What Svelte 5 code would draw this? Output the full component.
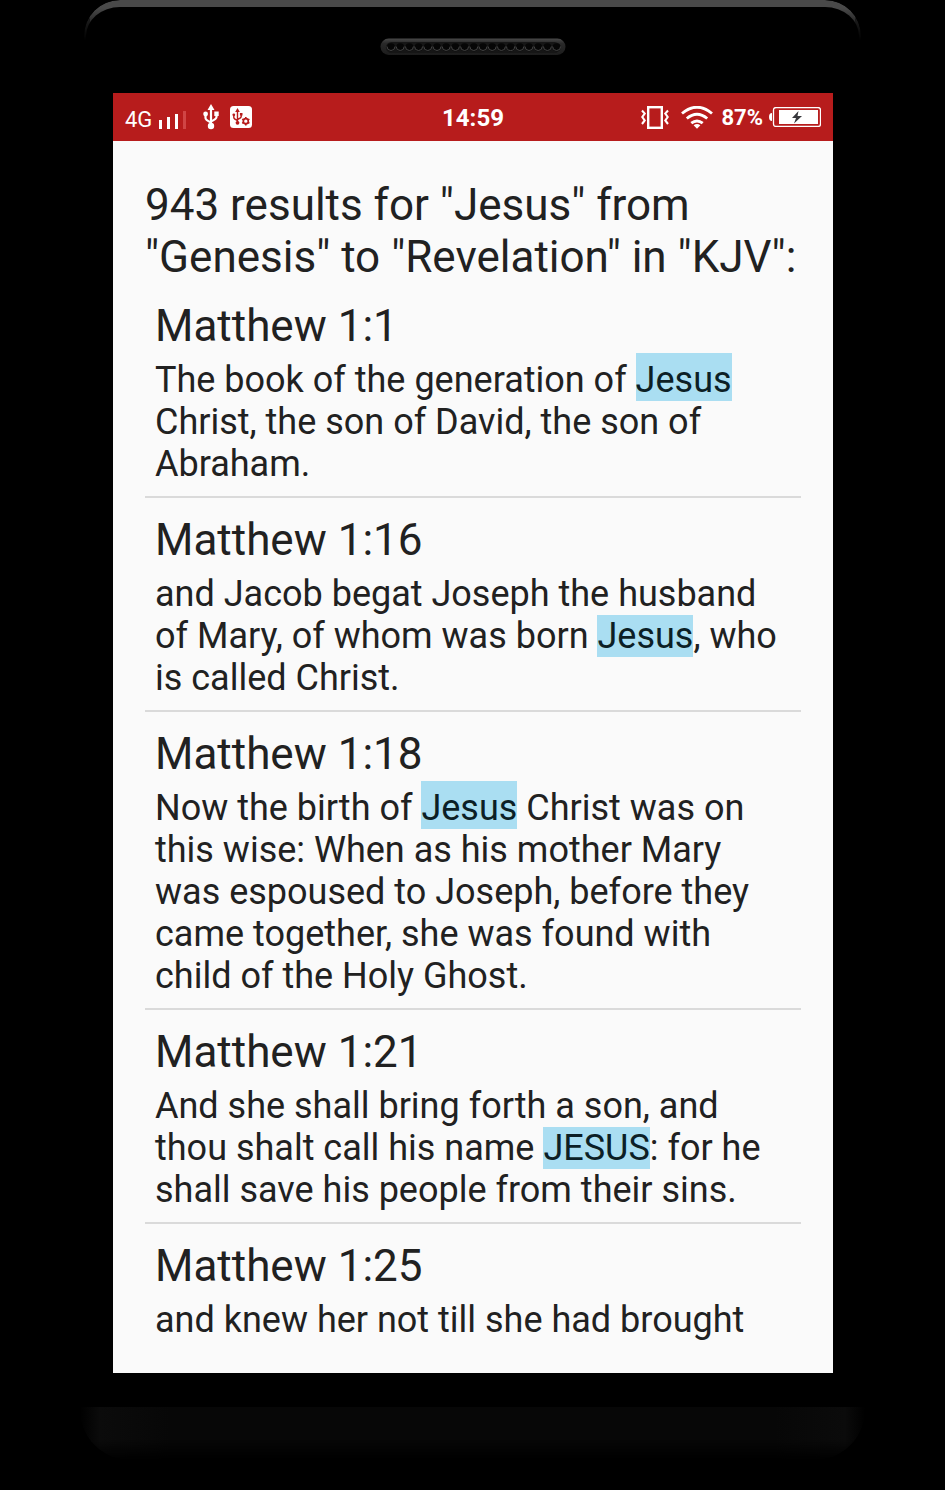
<script>
    const query = 'Jesus';
    const total = 943;
    const from = 'Genesis';
    const to = 'Revelation';
    const version = 'KJV';

    const results = [
        {
            ref: 'Matthew 1:1',
            before: 'The book of the generation of ',
            match: 'Jesus',
            after: ' Christ, the son of David, the son of Abraham.',
            firstLine: true
        },
        {
            ref: 'Matthew 1:16',
            before: 'and Jacob begat Joseph the husband of Mary, of whom was born ',
            match: 'Jesus',
            after: ', who is called Christ.'
        },
        {
            ref: 'Matthew 1:18',
            before: 'Now the birth of ',
            match: 'Jesus',
            after: ' Christ was on this wise: When as his mother Mary was espoused to Joseph, before they came together, she was found with child of the Holy Ghost.',
            firstLine: true
        },
        {
            ref: 'Matthew 1:21',
            before: 'And she shall bring forth a son, and thou shalt call his name ',
            match: 'JESUS',
            after: ': for he shall save his people from their sins.'
        },
        {
            ref: 'Matthew 1:25',
            before: 'and knew her not till she had brought'
        }
    ];

    const holes = Array.from({ length: 19 }, (_, i) => 11 + i * 9.2);
</script>

<div class="phone">
    <div class="top">
        <svg class="speaker" width="186" height="18" viewBox="0 0 186 18" aria-hidden="true">
            <defs>
                <linearGradient id="rim" x1="0" y1="0" x2="0" y2="1">
                    <stop offset="0" stop-color="#484848" />
                    <stop offset="0.3" stop-color="#292929" />
                    <stop offset="1" stop-color="#1c1c1c" />
                </linearGradient>
            </defs>
            <rect x="0.5" y="0.5" width="185" height="16.5" rx="8.2" fill="url(#rim)" />
            <rect x="6" y="4" width="174" height="11" rx="5.5" fill="#161616" />
            {#each holes as x}
                <circle cx={x} cy="9.3" r="4" fill="#060606" />
                <path d="M{x - 4} 8.500a4 4 0 0 0 8 0" fill="none" stroke="#444" />
            {/each}
        </svg>
    </div>

    <main class="screen">
        <header class="status">
            <div class="group">
                <span class="network">4G</span>
                <svg class="signal" width="28" height="20" viewBox="0 0 28 20" aria-hidden="true">
                    <path d="M0 11h3v9H0zM8 8h3v12H8zM16 5h3v15h-3z" fill="#fff" />
                    <path d="M24 2h3v18h-3z" fill="#d04545" />
                </svg>
                <svg class="usb" width="16" height="26" viewBox="0 0 16 26" aria-hidden="true">
                    <path d="M8 4v18M2.500 10v4q0 2 5.500 4.500M13.500 10v3q0 2-5.500 4.500" fill="none" stroke="#fff" stroke-width="2.200" />
                    <path d="M8 0l3.500 6h-7zM11.300 7.500h4.400v4.400h-4.400z" fill="#fff" />
                    <circle cx="2.600" cy="10" r="2.400" fill="#fff" />
                    <circle cx="8" cy="22" r="3.200" fill="#fff" />
                </svg>
                <svg width="22" height="22" viewBox="0 0 22 22" aria-hidden="true">
                    <rect width="22" height="22" rx="3.500" fill="#fff" />
                    <g fill="none" stroke="#b71c1c" stroke-width="1.400">
                        <path d="M7.500 4.500V17M3.800 9v2.500q0 1.500 3.700 3M11.200 8.500v2q0 1.500-3.700 3" />
                        <circle cx="15.800" cy="15.200" r="2.500" stroke-width="1.700" />
                        <path d="M15.800 11v1.600M15.800 17.800v1.600M12.200 13.100l1.400.800M18 16.500l1.400.800M12.200 17.300l1.400-.800M18 13.900l1.400-.800" stroke-width="1.600" />
                    </g>
                    <path d="M7.500 2l2.300 4H5.200zM9.900 7h2.600v2.600H9.900z" fill="#b71c1c" />
                    <circle cx="3.800" cy="8.800" r="1.400" fill="#b71c1c" />
                    <circle cx="7.500" cy="16.800" r="1.900" fill="#b71c1c" />
                </svg>
            </div>

            <time class="clock">14:59</time>

            <div class="group right">
                <svg width="28" height="23" viewBox="0 0 28 23" aria-hidden="true">
                    <rect x="7.200" y="1.200" width="13.600" height="20.600" fill="none" stroke="#fff" stroke-width="2.400" />
                    <path d="M1 4.500l2.700 3L1.300 11l2.400 3.500L1 18M27 4.500l-2.700 3 2.400 3.500-2.400 3.500L27 18" fill="none" stroke="#fff" stroke-width="2.100" />
                </svg>
                <svg class="wifi" width="32" height="23" viewBox="0 0 32 23" aria-hidden="true">
                    <path d="M1 7.500q15-12.500 30 0M5.800 12.500q10.200-8.500 20.400 0M10.300 17.200q5.700-4.600 11.400 0" fill="none" stroke="#fff" stroke-width="2.900" />
                    <path d="M12.600 19.300q3.400-2.600 6.800 0L16 22.700z" fill="#fff" />
                </svg>
                <span class="percent">87%</span>
                <svg width="52" height="20" viewBox="0 0 52 20" aria-hidden="true">
                    <path d="M3 6v8q-3 0-3-4t3-4z" fill="#fff" />
                    <rect x="4.500" y="0.500" width="47" height="19" rx="2.500" fill="none" stroke="#fff" stroke-width="1.300" />
                    <path d="M10 3h39v14H10z" fill="#fff" />
                    <path d="M29.500 4l-6.500 7h4l-2 5.500 8-7.500h-4.500z" fill="#37373c" />
                </svg>
            </div>
        </header>

        <section class="content">
            <h1>{total} results for "{query}" from "{from}" to "{to}" in "{version}":</h1>
            <ul>
                {#each results as r}
                    <li>
                        <h2>{r.ref}</h2>
                        <p>{r.before}{#if r.match}<mark class:first={r.firstLine}>{r.match}</mark>{r.after}{/if}</p>
                    </li>
                {/each}
            </ul>
        </section>
    </main>

    <div class="chin"></div>
</div>

<style>
    :global(body) {
        background: #000;
    }

    .phone {
        margin: 0 80px;
        padding-bottom: 30px;
        font-family: Roboto, "Liberation Sans", sans-serif;
        color: #212121;
    }

    .top {
        box-sizing: border-box;
        height: 93px;
        margin: 0 4px;
        padding-top: 30px;
        position: relative;
    }

    /* lit upper edge of the case */
    .top::before {
        content: "";
        position: absolute;
        inset: 0 0 auto;
        height: 50px;
        box-sizing: border-box;
        border: 2px solid #2c2c2c;
        border-top: 7px solid #494949;
        border-bottom: 0;
        border-radius: 36px 36px 0 0;
        mask-image: linear-gradient(#000 8px, transparent 40px);
    }

    .speaker {
        display: block;
        margin: 8px auto 0;
    }

    .screen {
        margin: 0 32px 0 33px;
        background: #fafafa;
    }

    .status {
        display: grid;
        grid-template-columns: 1fr auto 1fr;
        align-items: center;
        height: 48px;
        padding: 0 12px;
        background: #b71c1c;
        color: #fff;
    }

    .group {
        display: flex;
        align-items: center;
    }

    .right {
        justify-content: flex-end;
    }

    .network {
        font-size: 22px;
        line-height: 26px;
        padding-top: 6px;
    }

    .signal {
        margin: 4px 16px 0 7px;
    }

    .usb {
        margin-right: 11px;
    }

    .clock {
        font-size: 24px;
        line-height: 28px;
        font-weight: 700;
        padding-top: 2px;
    }

    .wifi {
        margin: 0 8px 0 12px;
    }

    .percent {
        font-size: 22px;
        line-height: 26px;
        font-weight: 700;
        margin-right: 6px;
        padding-top: 2px;
    }

    .content {
        padding: 38px 32px 32px;
    }

    h1, h2 {
        margin: 0;
        font-size: 44px;
        line-height: 52px;
        font-weight: 400;
    }

    ul {
        list-style: none;
        margin: 1px 0 0;
        padding: 0;
    }

    li {
        padding: 16px 10px 11px;
        border-bottom: 2px solid #dadada;
    }

    li:last-child {
        padding-bottom: 0;
        border-bottom: 0;
    }

    p {
        margin: 1px 0 0;
        padding-top: 6px;
        font-size: 36px;
        line-height: 42px;
    }

    mark {
        background: #aadef2;
        color: #0c1f26;
    }

    mark.first {
        padding-top: 6px;
    }

    .chin {
        height: 53px;
        margin-top: 34px;
        border-radius: 0 0 50px 50px;
        background: linear-gradient(90deg, #000, #0b0b0b 20px, #070707 90px, #070707 calc(100% - 90px), #0b0b0b calc(100% - 20px), #000);
        mask-image: linear-gradient(#000 60%, transparent);
    }
</style>
